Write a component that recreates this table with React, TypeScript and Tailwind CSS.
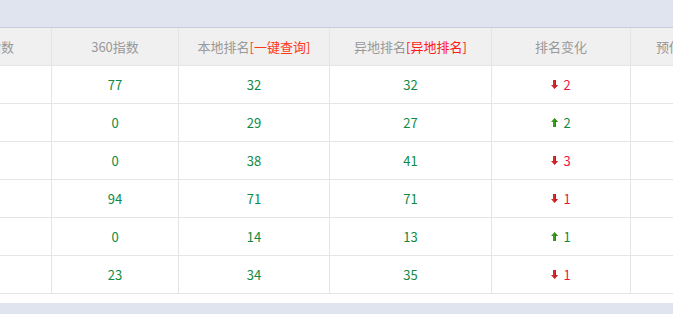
const rows = [
  { idx360: "77", local: "32", remote: "32", dir: "down", change: "2" },
  { idx360: "0", local: "29", remote: "27", dir: "up", change: "2" },
  { idx360: "0", local: "38", remote: "41", dir: "down", change: "3" },
  { idx360: "94", local: "71", remote: "71", dir: "down", change: "1" },
  { idx360: "0", local: "14", remote: "13", dir: "up", change: "1" },
  { idx360: "23", local: "34", remote: "35", dir: "down", change: "1" },
];

const cols = ["w-[127px]", "w-[127px]", "w-[151px]", "w-[162px]", "w-[139px]", "w-[102px]"];

function Arrow({ dir }: { dir: string }) {
  if (dir === "up") {
    return (
      <svg width="7" height="9" viewBox="0 0 7 9" className="mr-[5px]">
        <polygon points="3.5,0 7,4 5,4 5,9 2,9 2,4 0,4" fill="#3c9a1c" />
        <polygon points="3.5,0 7,4 5,4 5,9 4,9 4,4" fill="#2c7a12" opacity="0.6" />
      </svg>
    );
  }
  return (
    <svg width="7" height="9" viewBox="0 0 7 9" className="mr-[5px]">
      <polygon points="2,0 5,0 5,5 7,5 3.5,9 0,5 2,5" fill="#d8272d" />
      <polygon points="4,0 5,0 5,5 7,5 3.5,9 4,5" fill="#a81b20" opacity="0.6" />
    </svg>
  );
}

function Cell({ i, children }: { i: number; children: React.ReactNode }) {
  return (
    <div
      className={`${cols[i]} shrink-0 h-full flex items-center justify-center ${
        i < 5 ? "border-r border-[#e5e5e5]" : ""
      }`}
    >
      {children}
    </div>
  );
}

export default function App() {
  return (
    <div
      className="w-[673px] h-[314px] overflow-hidden bg-[#e0e4ee] pt-[27px] text-[13px]"
      style={{ fontFamily: '"Microsoft YaHei", "Noto Sans CJK SC", "Noto Sans", sans-serif' }}
    >
      <div className="bg-white border-t border-[#c8cddd] pb-[9px] overflow-hidden">
        <div className="ml-[-75px] w-[900px]">
          <div className="flex h-[38px] bg-[#f0f0f0] border-b border-[#e5e5e5] text-[#999]">
            <Cell i={0}>百度指数</Cell>
            <Cell i={1}>360指数</Cell>
            <Cell i={2}>
              本地排名<span className="text-[#ff3a14]">[一键查询]</span>
            </Cell>
            <Cell i={3}>
              异地排名<span className="text-[#ff1a1a]">[异地排名]</span>
            </Cell>
            <Cell i={4}>排名变化</Cell>
            <Cell i={5}>预估流量</Cell>
          </div>
          {rows.map((r, k) => (
            <div key={k} className="flex h-[38px] border-b border-[#e5e5e5] text-[#0f8a45]">
              <Cell i={0}>{""}</Cell>
              <Cell i={1}>{r.idx360}</Cell>
              <Cell i={2}>{r.local}</Cell>
              <Cell i={3}>{r.remote}</Cell>
              <Cell i={4}>
                <Arrow dir={r.dir} />
                <span className={r.dir === "up" ? "text-[#0f8a45]" : "text-[#f0143c]"}>{r.change}</span>
              </Cell>
              <Cell i={5}>{""}</Cell>
            </div>
          ))}
        </div>
      </div>
    </div>
  );
}
